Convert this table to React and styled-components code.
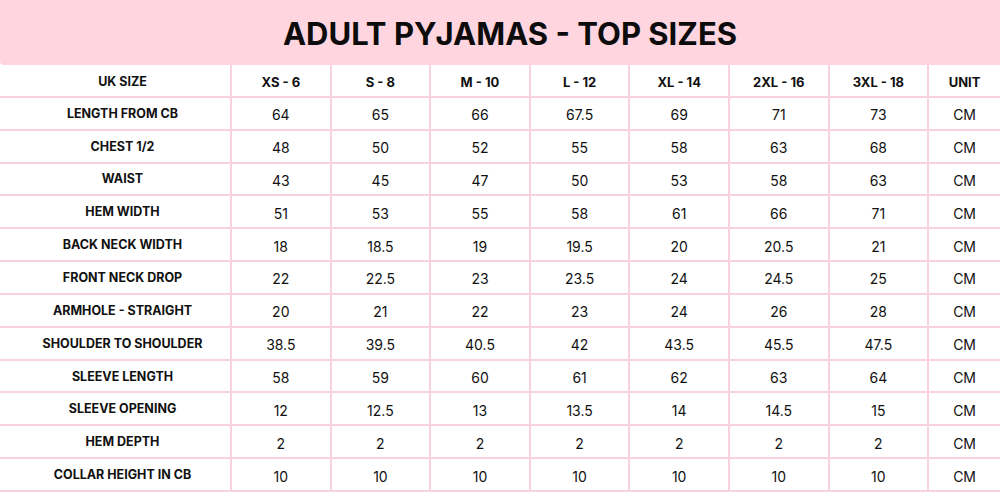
import React from "react";
import styled, { createGlobalStyle } from "styled-components";

const GlobalStyle = createGlobalStyle`
    html, body {
        margin: 0;
        padding: 0;
        background: #ffffff;
    }
    body {
        font-family: Inter, "Open Sans", Arial, sans-serif;
        color: #111111;
    }
`;

const Page = styled.div`
    width: 1000px;
    height: 493px;
    overflow: hidden;
    display: flex;
    flex-direction: column;
`;

const TitleBar = styled.header`
    height: 65px;
    background-color: #ffd5df;
    border-bottom-left-radius: 4px;
    display: flex;
    align-items: center;
    justify-content: center;
    padding-left: 20px;
    padding-top: 2px;
    box-sizing: border-box;
`;

const Title = styled.h1`
    margin: 0;
    font-family: Inter, "Open Sans", sans-serif;
    font-weight: 700;
    font-size: 31px;
    letter-spacing: 0;
    color: #0c0c0c;
`;

// label + 7 sizes + unit
const Table = styled.div`
    display: grid;
    grid-template-columns: 232px repeat(7, 99.6px) 1fr;
    grid-auto-rows: 32.85px;
`;

const Cell = styled.div`
    box-sizing: border-box;
    display: flex;
    align-items: center;
    justify-content: center;
    border-bottom: 2px solid #f8d3de;
    border-right: ${props => (props.$last ? "none" : "2px solid #f8d3de")};
    font-size: ${props => (props.$bold ? "13px" : "14px")};
    font-weight: ${props => (props.$bold ? 700 : 400)};
    padding-top: ${props => (props.$head ? "3px" : props.$bold ? "0" : "3px")};
    color: #111111;
    white-space: nowrap;
`;

const LabelCell = styled(Cell)`
    padding-left: 15px;
    font-size: 12.5px;
`;

const sizes = ["XS - 6", "S - 8", "M - 10", "L - 12", "XL - 14", "2XL - 16", "3XL - 18"];

const rows = [
    ["LENGTH FROM CB", 64, 65, 66, 67.5, 69, 71, 73],
    ["CHEST 1/2", 48, 50, 52, 55, 58, 63, 68],
    ["WAIST", 43, 45, 47, 50, 53, 58, 63],
    ["HEM WIDTH", 51, 53, 55, 58, 61, 66, 71],
    ["BACK NECK WIDTH", 18, 18.5, 19, 19.5, 20, 20.5, 21],
    ["FRONT NECK DROP", 22, 22.5, 23, 23.5, 24, 24.5, 25],
    ["ARMHOLE - STRAIGHT", 20, 21, 22, 23, 24, 26, 28],
    ["SHOULDER TO SHOULDER", 38.5, 39.5, 40.5, 42, 43.5, 45.5, 47.5],
    ["SLEEVE LENGTH", 58, 59, 60, 61, 62, 63, 64],
    ["SLEEVE OPENING", 12, 12.5, 13, 13.5, 14, 14.5, 15],
    ["HEM DEPTH", 2, 2, 2, 2, 2, 2, 2],
    ["COLLAR HEIGHT IN CB", 10, 10, 10, 10, 10, 10, 10],
];

export default function App() {
    return (
        <Page>
            <GlobalStyle />
            <TitleBar>
                <Title>ADULT PYJAMAS - TOP SIZES</Title>
            </TitleBar>
            <Table>
                <LabelCell $bold $head>UK SIZE</LabelCell>
                {sizes.map(s => (
                    <Cell $bold $head key={s}>{s}</Cell>
                ))}
                <Cell $bold $head $last>UNIT</Cell>

                {rows.map(([label, ...vals]) => (
                    <React.Fragment key={label}>
                        <LabelCell $bold>{label}</LabelCell>
                        {vals.map((v, i) => (
                            <Cell key={i}>{v}</Cell>
                        ))}
                        <Cell $last>CM</Cell>
                    </React.Fragment>
                ))}
            </Table>
        </Page>
    );
}
